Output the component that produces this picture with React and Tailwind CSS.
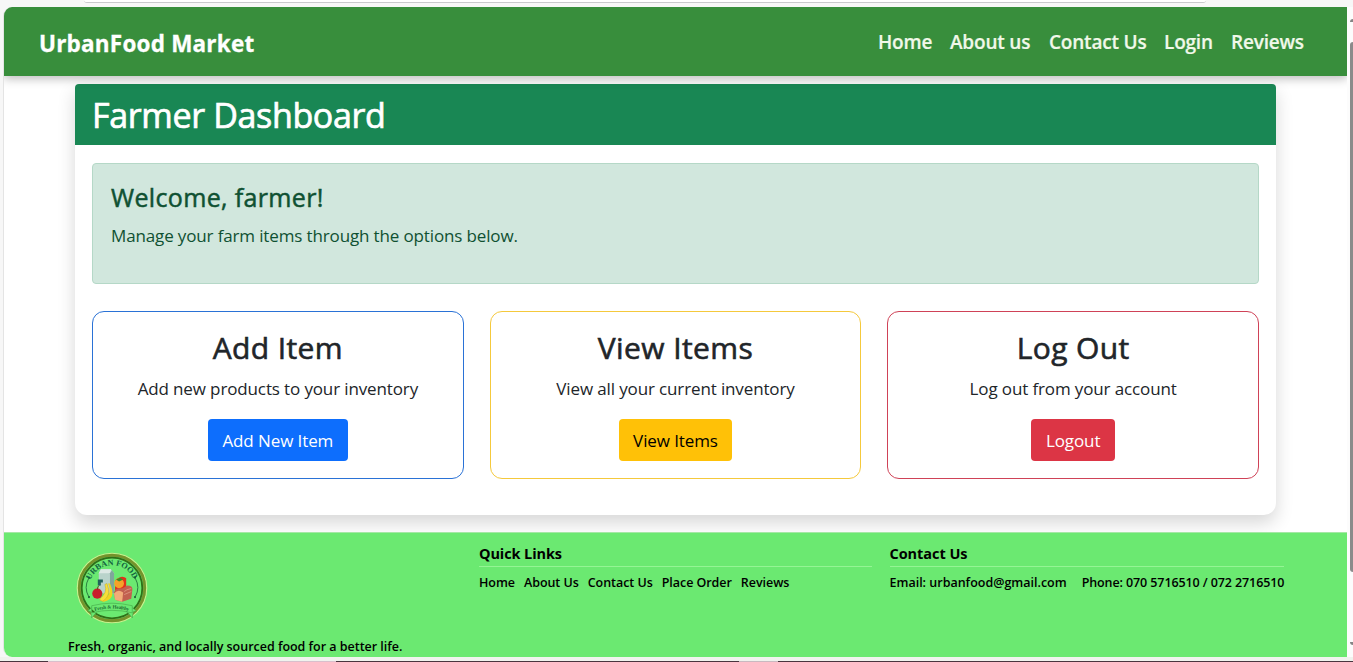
import React from "react";

const NAV = [
  ["Home", "w-[55px]"],
  ["About us", "w-[82px]"],
  ["Contact Us", "w-[98px]"],
  ["Login", "w-[50px]"],
  ["Reviews", "w-[73px]"],
];

const CARDS = [
  {
    title: "Add Item",
    text: "Add new products to your inventory",
    action: "Add New Item",
    border: "border-[#2a72d6]",
    button: "w-[140px] bg-[#0d6efd] text-white",
  },
  {
    title: "View Items",
    text: "View all your current inventory",
    action: "View Items",
    border: "border-[#f5c93c]",
    button: "w-[113px] bg-[#ffc107] text-black",
  },
  {
    title: "Log Out",
    text: "Log out from your account",
    action: "Logout",
    border: "border-[#cf4257]",
    button: "w-[84px] bg-[#dc3545] text-white",
  },
];

const LINKS = ["Home", "About Us", "Contact Us", "Place Order", "Reviews"];

function Logo() {
  return (
    <svg viewBox="0 0 70 72" className="h-[73px] w-[72px]">
      <defs>
        <path id="arcTop" d="M13.500 28.500 A23 23 0 0 1 57 28.500" />
        <path id="arcBottom" d="M17 58.500 Q35 53 53 58.500" />
      </defs>
      <circle cx="35" cy="35.500" r="34.200" fill="none" stroke="#c9ef8c" strokeWidth="1.300" />
      <circle cx="35" cy="35.500" r="32.300" fill="none" stroke="#76932c" strokeWidth="2.800" />
      <circle cx="35" cy="35.500" r="29.900" fill="none" stroke="#2f6f18" strokeWidth="1.800" />
      <path d="M12 26 Q7 35 12 44 M58 26 Q63 35 58 44" fill="none" stroke="#24753c" strokeWidth="0.900" />
      <g fill="#1e6235">
        <circle cx="12.300" cy="25.300" r="1.100" />
        <circle cx="57.700" cy="25.300" r="1.100" />
        <circle cx="12.300" cy="44.500" r="1.100" />
        <circle cx="57.700" cy="44.500" r="1.100" />
      </g>
      <text fill="#12633f" className="font-['Liberation_Serif',serif] text-[8px] font-bold">
        <textPath href="#arcTop" startOffset="1" textLength="54">URBAN FOOD</textPath>
      </text>
      <path d="M22 21 L24 17 H34 L37 21 V41 H22Z" fill="#b9d3cb" />
      <path d="M22 21 H33 L34 17 H24Z" fill="#dce8e4" />
      <path d="M33 21 L35 18 L37 21 V41 H33Z" fill="#7fa69b" />
      <path d="M21 27 h5 v3 h-2 v3 h-3z" fill="#20635a" />
      <path d="M38 28 Q45 22 49 26 V35 L38 39Z" fill="#e2301c" />
      <circle cx="42" cy="31" r="4.800" fill="#f7a128" />
      <path d="M39 27 l4 -1.500 3 1.500 -4 2z" fill="#3b8b26" />
      <path d="M37 40 Q38 35 45 36 L50 33 Q56 33 55 38 L54 46 L45 49 L38 47Z" fill="#c2604f" />
      <path d="M37 41 Q41 36 46 40 L45 49 L38 47Z" fill="#f3ac78" />
      <path d="M47 39 Q49 37 54 36 M47 42 L54 39" fill="none" stroke="#e09a83" strokeWidth="0.800" />
      <circle cx="20.500" cy="41" r="5" fill="#c91e2c" />
      <path d="M20.500 37 q0 -3 2 -4" fill="none" stroke="#6b3d1e" strokeWidth="0.900" />
      <path d="M31 31 Q36 42 26 47 Q24 48.500 27 49 Q40 46 33 31Z" fill="#f0d51f" />
      <path d="M28 32 Q31 40 23 46 Q22 48 26 48.500 Q35 43 30 31Z" fill="#f6e03a" stroke="#b99d16" strokeWidth="0.400" />
      <path
        d="M15 53 Q35 48 55 53 V60 Q35 55 15 60Z M15 55 L11 58 L14 59 L15 65 L20 59 M55 55 L59 58 L56 59 L55 65 L50 59"
        fill="#6be971"
        stroke="#43a848"
        strokeWidth="0.600"
      />
      <text fill="#1d6b33" className="font-['Liberation_Serif',serif] text-[5px] font-bold">
        <textPath href="#arcBottom" startOffset="1" textLength="34">Fresh &amp; Healthy</textPath>
      </text>
    </svg>
  );
}

function Card({ title, text, action, border, button }) {
  return (
    <div className={`flex h-[168px] flex-col items-center rounded-[12px] border bg-white pt-[17px] text-[#212529] ${border}`}>
      <h2 className="text-[30px] leading-[38px] font-medium tracking-[0.4px] [-webkit-text-stroke:0.6px_#212529]">{title}</h2>
      <p className="mt-[8px] text-[17px] leading-[28px] tracking-[-0.13px]">{text}</p>
      <a className={`mt-[16px] flex h-[42px] items-center justify-center rounded-[4px] pt-[2px] text-[17px] tracking-[-0.1px] ${button}`}>
        {action}
      </a>
    </div>
  );
}

export default function App() {
  return (
    <div className="flex h-[662px] w-[1353px] flex-col overflow-hidden bg-[#f7f7f7] font-['Open_Sans','Noto_Sans',sans-serif] whitespace-nowrap">
      <div className="h-[7px] pl-[84px]">
        <div className="h-[3px] w-[1122px] rounded-b-[10px] border-b border-[#c9c9cd] bg-white" />
      </div>
      <div className="flex h-[650px] pl-[3px]">
        <div className="flex w-[1344px] flex-col overflow-hidden rounded-l-[9px] border-l border-[#e4e4e4] bg-white">
          <header className="z-10 flex h-[69px] shrink-0 items-center justify-between bg-[#388e3c] pr-[43px] pl-[35px] shadow-[0_3px_9px_rgba(0,0,0,0.25)]">
            <div className="pt-[5px] text-[22.5px] font-bold tracking-[0.2px] text-white [-webkit-text-stroke:0.3px_white]">UrbanFood Market</div>
            <nav className="flex gap-[17px] pt-[2px] text-[19px] font-semibold tracking-[-0.2px] text-[#f1f8e9] [-webkit-text-stroke:0.2px_#f1f8e9]">
              {NAV.map(([label, width]) => (
                <a key={label} className={width}>{label}</a>
              ))}
            </nav>
          </header>
          <main className="h-[456px] shrink-0 pt-[8px] pl-[71px]">
            <section className="h-[431px] w-[1201px] rounded-t-[4px] rounded-b-[12px] bg-white shadow-[0_8px_18px_rgba(0,0,0,0.16)]">
              <h1 className="h-[61px] rounded-t-[4px] bg-[#198754] pt-[9px] pl-[17px] text-[34px] leading-[44px] font-medium tracking-[-0.35px] text-white [-webkit-text-stroke:0.7px_white]">
                Farmer Dashboard
              </h1>
              <div className="px-[17px] pt-[18px]">
                <div className="h-[121px] rounded-[4px] border border-[#b5d8c7] bg-[#d1e7dd] pt-[16px] pl-[18px] text-[#0f5132]">
                  <h4 className="text-[25px] leading-[34px] font-medium tracking-[0.35px] [-webkit-text-stroke:0.5px_#0f5132]">Welcome, farmer!</h4>
                  <p className="mt-[8px] text-[17px] leading-[28px] tracking-[-0.14px]">
                    Manage your farm items through the options below.
                  </p>
                </div>
                <div className="mt-[27px] grid grid-cols-3 gap-[26px]">
                  {CARDS.map((card) => (
                    <Card key={card.title} {...card} />
                  ))}
                </div>
              </div>
            </section>
          </main>
          <footer className="flex h-[125px] shrink-0 border-t border-[#a5e8a5] bg-[#6be971] text-black">
            <div className="w-[411px] pl-[64px] text-[12.5px] font-semibold">
              <div className="pt-[19px] pl-[8px]"><Logo /></div>
              <p className="mt-[12px] leading-[20px] tracking-[-0.02px]">Fresh, organic, and locally sourced food for a better life.</p>
            </div>
            <div className="w-[410px] pl-[64px]">
              <h5 className="mt-[10px] w-[393px] border-b border-[#94f594] pb-[2px] text-[14.5px] leading-[21px] font-bold tracking-[-0.1px]">Quick Links</h5>
              <ul className="mt-[6px] flex gap-[9px] text-[12.5px] leading-[20px] font-semibold tracking-[-0.05px]">
                {LINKS.map((label) => <li key={label}>{label}</li>)}
              </ul>
            </div>
            <div className="pl-[64.500px]">
              <h5 className="mt-[10px] w-[394px] border-b border-[#94f594] pb-[2px] text-[14.5px] leading-[21px] font-bold tracking-[-0.05px]">Contact Us</h5>
              <div className="mt-[6px] flex gap-[15px] text-[12.5px] leading-[20px] font-semibold">
                <span>Email: urbanfood@gmail.com</span>
                <span className="tracking-[-0.1px]">Phone: 070 5716510 / 072 2716510</span>
              </div>
            </div>
          </footer>
        </div>
        <div className="flex w-[6px] flex-col items-end bg-[#fcfcfc]">
          <div className="mt-[12px] h-[3px] w-[3px] rounded-tl-[3px] bg-[#858585]" />
          <div className="mt-[20px] h-[530px] w-[3px] rounded-l-[3px] bg-[#8b8b8b]" />
          <div className="mt-[70px] h-[3px] w-[3px] rounded-bl-[3px] bg-[#858585]" />
        </div>
      </div>
      <div className="h-[4px] bg-[#f0f3ee]" />
      <div className="flex h-px bg-[#49353f]">
        <div className="ml-[48px] h-px w-[288px] bg-[#d9bfcc]" />
        <div className="ml-[403px] h-px w-[39px] bg-[#c9b9c0]" />
      </div>
    </div>
  );
}
